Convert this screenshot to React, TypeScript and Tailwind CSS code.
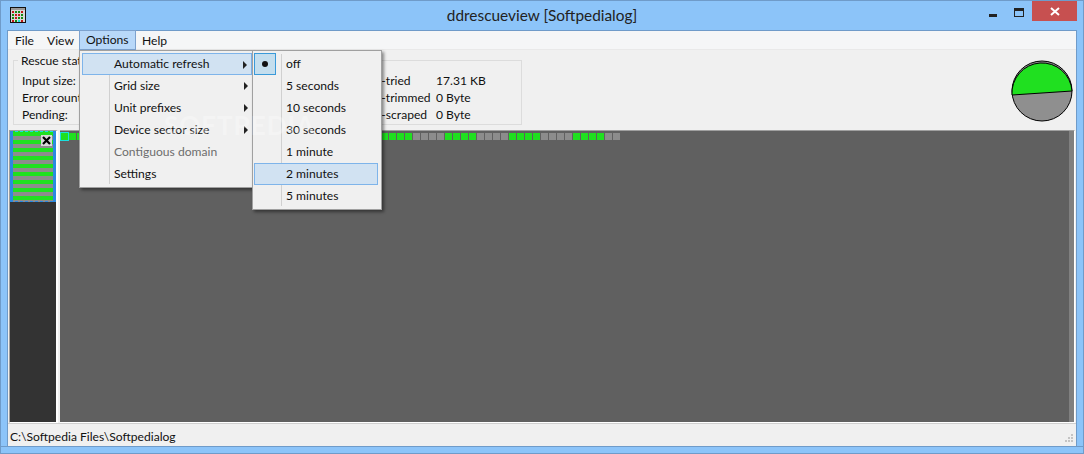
import React from "react";

const optionsItems = [
  { label: "Automatic refresh", arrow: true, active: true },
  { label: "Grid size", arrow: true },
  { label: "Unit prefixes", arrow: true },
  { label: "Device sector size", arrow: true },
  { label: "Contiguous domain", disabled: true },
  { label: "Settings" },
];

const refreshItems = ["off", "5 seconds", "10 seconds", "30 seconds", "1 minute", "2 minutes", "5 minutes"];

const cells = Array.from({ length: 70 }, (_, i) => i % 8 < 4);
const stripes = Array.from({ length: 9 }, (_, i) => i);
const dashes = Array.from({ length: 8 }, (_, i) => i);

const Arrow = () => (
  <svg width="5" height="8" viewBox="0 0 5 8" className="absolute right-[3px] top-[7px]">
    <path d="M0 0 L4 4 L0 8 Z" fill="#222" />
  </svg>
);

const AppIcon = () => (
  <svg width="16" height="16" viewBox="0 0 16 16" shapeRendering="crispEdges">
    <rect x="0" y="0" width="16" height="16" fill="#111" />
    <rect x="1" y="1" width="14" height="2" fill="#9a9a9a" />
    <rect x="1" y="3" width="14" height="12" fill="#d8d8d8" />
    {[0, 1, 2, 3].map((r) =>
      [0, 1, 2, 3].map((c) => (
        <rect
          key={`${r}${c}`}
          x={2 + c * 3}
          y={4 + r * 3}
          width="2"
          height="2"
          fill={r === 3 && c === 2 ? "#19d8d8" : (r + c) % 3 === 0 ? "#c01818" : (r * c) % 4 === 1 ? "#c01818" : "#128a12"}
        />
      ))
    )}
  </svg>
);

const Pie = () => (
  <svg width="64" height="64" viewBox="0 0 64 64">
    <circle cx="32" cy="32" r="30" fill="#8f8f8f" stroke="#000" strokeWidth="1" />
    <path d="M2 36 L62 32 A30 30 0 0 0 2 36 Z" fill="#20e020" stroke="#000" strokeWidth="1" />
  </svg>
);

export default function App() {
  return (
    <div className="relative flex h-[454px] w-[1084px] flex-col overflow-hidden border border-[#6f9bc9] bg-[#8cc4f9] font-['Lato',sans-serif] text-[12.1px] text-[#111]">
      {/* Title bar */}
      <div className="relative flex h-[29px] shrink-0 items-center justify-center">
        <div className="absolute left-[9px] top-[6px]">
          <AppIcon />
        </div>
        <span className="text-[15.4px] text-[#222]">ddrescueview [Softpedialog]</span>
        <div className="absolute right-[6px] top-0 flex items-start">
          <div className="mr-[17px] mt-[13px] h-[3px] w-[8px] bg-[#222]" />
          <div className="mr-[8px] mt-[7px] h-[9px] w-[10px] border border-t-[3px] border-[#222]" />
          <div className="flex h-[20px] w-[45px] items-center justify-center bg-[#c75050]">
            <svg width="10" height="9" viewBox="0 0 10 9">
              <path d="M1 1 L9 8 M9 1 L1 8" stroke="#fff" strokeWidth="2" />
            </svg>
          </div>
        </div>
      </div>

      {/* Client area */}
      <div className="mx-[6px] flex min-h-0 flex-1 flex-col border border-b-0 border-[#6f9bc9] bg-[#f0f0f0]">
        {/* Menu bar */}
        <div className="flex h-[19px] shrink-0 items-center border-b border-[#e9e9e9] bg-[#f5f6f7] pl-[6px] pt-[2px]">
          <span className="ml-px w-[32px]">File</span>
          <span className="w-[32px]">View</span>
          <span className="-mt-[3px] flex h-[20px] w-[57px] items-center border border-[#7da2ce] bg-[#b8d8f9] pl-[6px] pt-[2px]">Options</span>
          <span className="ml-[6px]">Help</span>
        </div>

        {/* Status group */}
        <div className="flex h-[80px] shrink-0 items-start justify-between pl-[5px] pr-[2px]">
          <div className="relative mt-[10px] flex h-[65px] w-[509px] border border-[#dcdcdc]">
            <span className="absolute left-[4px] top-[-7px] bg-[#f0f0f0] px-[3px] leading-[14px]">Rescue status</span>
            <div className="ml-[8px] mt-[11px] flex w-[60px] shrink-0 flex-col whitespace-nowrap leading-[17px]">
              <span>Input size:</span>
              <span>Error count:</span>
              <span>Pending:</span>
            </div>
            <div className="ml-[279px] mt-[11px] flex w-[75px] shrink-0 flex-col leading-[17px]">
              <span>non-tried</span>
              <span>non-trimmed</span>
              <span>non-scraped</span>
            </div>
            <div className="mt-[11px] flex flex-col leading-[17px]">
              <span>17.31 KB</span>
              <span>0 Byte</span>
              <span>0 Byte</span>
            </div>
          </div>
          <div className="mt-[9px]">
            <Pie />
          </div>
        </div>

        {/* Grid panels */}
        <div className="flex min-h-0 flex-1 gap-[2px] border-b border-[#cfcfcf] px-px">
          <div className="flex w-[49px] flex-col border-b border-l border-r-2 border-t border-[#a0a0a0] border-b-white border-r-white bg-[#333]">
            <div className="relative h-[71px] border-x-[3px] border-[#2b8ae0]">
              <div className="flex h-px gap-[3px] bg-[#19e0e0]">
                {dashes.map((i) => (
                  <div key={i} className="h-px w-[2px] bg-[#20e020]" />
                ))}
              </div>
              <div className="flex h-[69px] flex-col overflow-hidden">
                {stripes.map((i) => (
                  <React.Fragment key={i}>
                    <div className="h-[4px] shrink-0 bg-[#20e020]" />
                    <div className="h-[4px] shrink-0 bg-[#8c8c8c]" />
                  </React.Fragment>
                ))}
              </div>
              <div className="flex h-px gap-[3px] bg-[#2b8ae0]">
                {dashes.map((i) => (
                  <div key={i} className="h-px w-[2px] bg-[#8c8c8c]" />
                ))}
              </div>
              <div className="absolute right-[1px] top-[4px] flex h-[11px] w-[11px] items-center justify-center bg-[#d8d8d8]">
                <svg width="9" height="9" viewBox="0 0 9 9">
                  <path d="M1 1 L8 8 M8 1 L1 8" stroke="#000" strokeWidth="2.2" />
                </svg>
              </div>
            </div>
          </div>
          <div className="flex min-w-0 flex-1 border-b border-r border-t border-[#a0a0a0] border-b-white border-r-white">
            <div className="flex flex-1 flex-wrap content-start gap-px bg-[#606060] pl-[1px] pt-[2px]">
              {cells.map((green, i) => (
                <div
                  key={i}
                  className={`h-[7px] w-[7px] ${green ? "bg-[#20e020]" : "bg-[#8c8c8c]"} ${i === 0 ? "outline outline-1 outline-[#19e0e0]" : ""}`}
                />
              ))}
            </div>
            <div className="w-[5px] bg-[#808080]" />
          </div>
        </div>

        {/* Status bar */}
        <div className="relative flex h-[22px] shrink-0 items-center pl-[2px] pt-[4px]">
          <span>C:\Softpedia Files\Softpedialog</span>
          <svg width="10" height="10" viewBox="0 0 10 10" className="absolute bottom-[2px] right-[2px]" shapeRendering="crispEdges">
            <path d="M7 0h2v2h-2z M4 3h2v2h-2z M7 3h2v2h-2z M1 6h2v2h-2z M4 6h2v2h-2z M7 6h2v2h-2z" fill="#c4c4c4" />
          </svg>
        </div>
      </div>
      <div className="h-[7px] shrink-0 border-t border-[#6f9bc9]" />

      {/* Options menu */}
      <div className="absolute left-[78px] top-[49px] h-[138px] w-[174px] border border-[#a0a0a0] bg-[#f0f0f0] py-[2px] pl-[2px] shadow-[2px_2px_3px_rgba(0,0,0,0.45)]">
        <div className="absolute bottom-[3px] left-[29px] top-[3px] w-px bg-[#d0d0d0]" />
        {optionsItems.map((item) => (
          <div
            key={item.label}
            className={`relative flex h-[22px] items-center ${item.active ? "border border-[#7eb4ea] bg-[#d1e2f2] pl-[31px]" : "pl-[32px]"} ${item.disabled ? "text-[#6d6d6d]" : ""}`}
          >
            {item.label}
            {item.arrow && <Arrow />}
          </div>
        ))}
      </div>

      {/* Refresh submenu */}
      <div className="absolute left-[251px] top-[49px] h-[160px] w-[130px] border border-[#a0a0a0] bg-[#f0f0f0] py-[2px] pl-[1px] pr-[3px] shadow-[2px_2px_3px_rgba(0,0,0,0.45)]">
        <div className="absolute bottom-[3px] left-[28px] top-[3px] w-px bg-[#d0d0d0]" />
        <div className="absolute left-[1px] top-[2px] flex h-[22px] w-[22px] items-center justify-center border border-[#3a9ad9] bg-[#c4deee]">
          <div className="h-[6px] w-[6px] rounded-full bg-[#111]" />
        </div>
        {refreshItems.map((label) => (
          <div
            key={label}
            className={`relative flex h-[22px] items-center ${label === "2 minutes" ? "border border-[#7eb4ea] bg-[#d1e2f2] pl-[31px]" : "pl-[32px]"}`}
          >
            {label}
          </div>
        ))}
      </div>

      {/* Softpedia watermark */}
      <span className="pointer-events-none absolute left-[163px] top-[105px] text-[26px] font-bold tracking-[1px] text-white opacity-30">
        SOFTPEDIA
      </span>
    </div>
  );
}
